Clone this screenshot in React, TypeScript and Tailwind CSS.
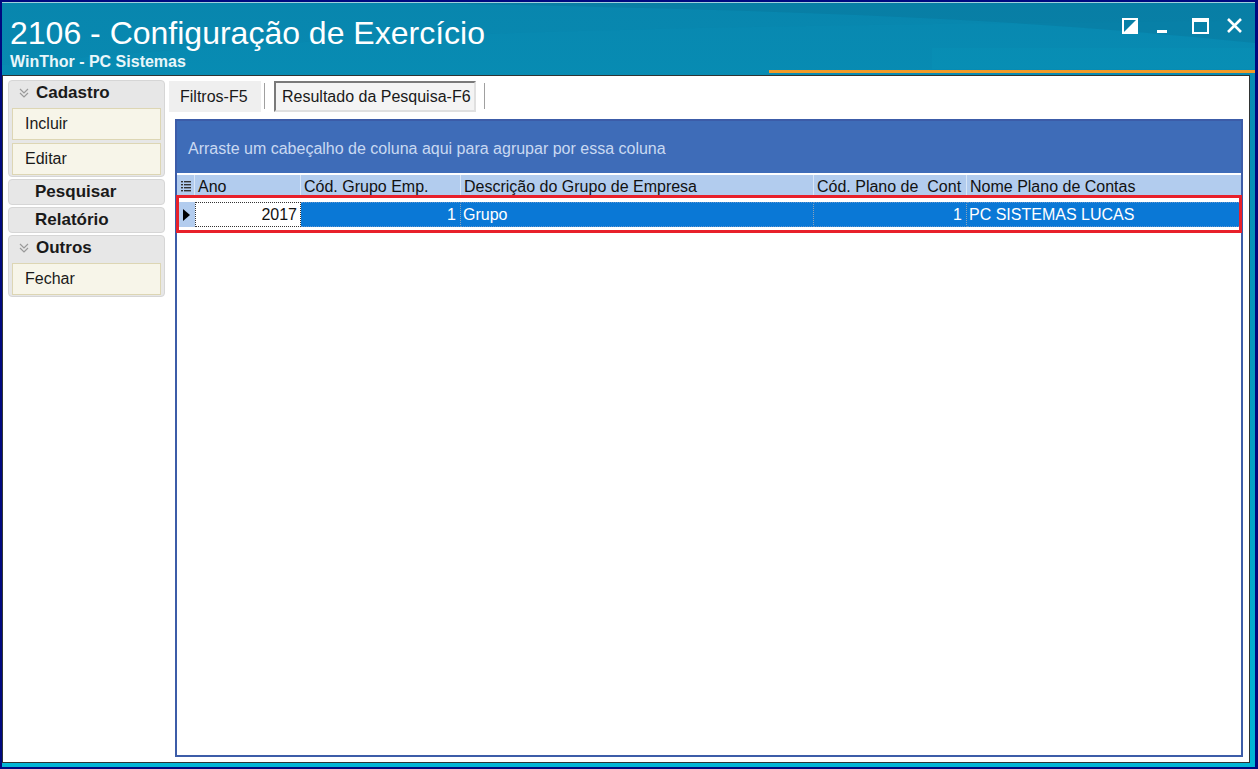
import React from 'react';

const cols = [
  { label: 'Ano', w: 'w-[106px]' },
  { label: 'Cód. Grupo Emp.', w: 'w-[160px]' },
  { label: 'Descrição do Grupo de Empresa', w: 'w-[353px]' },
  { label: 'Cód. Plano de  Cont', w: 'w-[153px]' },
  { label: 'Nome Plano de Contas', w: 'flex-1' },
];

const SideItem = ({ label }: { label: string }) => (
  <div className="mx-[3px] flex h-[32px] items-center border border-[#ddd6b4] bg-[#f7f5e9] pl-[12px] text-[16px] text-[#1a1a1a]">
    {label}
  </div>
);

const Chevrons = () => (
  <svg width="12" height="12" viewBox="0 0 12 12" className="mr-[6px]">
    <path d="M2 2 L6 6 L10 2 M2 6 L6 10 L10 6" fill="none" stroke="#9a9a9a" strokeWidth="1.2" />
  </svg>
);

const GroupHeader = ({ label, chevron }: { label: string; chevron?: boolean }) => (
  <div className="flex h-[24px] items-center pl-[9px] text-[17px] font-bold text-[#1a1a1a]">
    {chevron ? <Chevrons /> : <span className="w-[17px]" />}
    {label}
  </div>
);

const App = () => {
  return (
    <div className="h-[769px] w-[1258px] overflow-hidden bg-[#00097f] pb-[2px] pl-[2px] pr-[3px] pt-[2px] font-['Liberation_Sans',Arial,sans-serif]">
      <div className="flex h-full flex-col border-t border-[#9fd0dc] bg-[linear-gradient(180deg,#0888b0_0%,#0698bc_45%,#02b6d6_100%)]">
        {/* Title bar */}
        <div className="relative h-[66px] overflow-hidden">
          <svg className="absolute inset-0" width="1253" height="66" viewBox="0 0 1253 66" preserveAspectRatio="none">
            <path d="M0 62 C 300 30, 700 22, 1253 18 L1253 0 L0 0 Z" fill="#0a7ea4" opacity="0.18" />
            <path d="M420 0 C 800 8, 1000 14, 1253 40 L1253 0 Z" fill="#06678c" opacity="0.25" />
            <path d="M930 45 L1253 45 L1253 66 L930 66 Z" fill="#0796bb" opacity="0.25" />
          </svg>
          <div className="relative flex items-start justify-between pl-[8px] pr-[12px]">
            <div className="flex flex-col">
              <div className="pt-[14px] text-[32px] leading-[32px] text-white">2106 - Configuração de Exercício</div>
              <div className="mt-[4px] text-[16px] font-bold leading-[18px] text-[#e8f6fa]">WinThor - PC Sistemas</div>
            </div>
            <div className="flex items-start pt-[15px]">
              <svg width="16" height="16" viewBox="0 0 16 16" className="mr-[18px]">
                <rect x="1" y="1" width="14" height="14" fill="none" stroke="white" strokeWidth="2" />
                <path d="M1 15 L15 1 L15 15 Z" fill="white" />
              </svg>
              <svg width="12" height="16" viewBox="0 0 12 16" className="mr-[24px]">
                <rect x="1" y="12" width="10" height="3" fill="white" />
              </svg>
              <svg width="17" height="16" viewBox="0 0 17 16" className="mr-[17px]">
                <rect x="1" y="1" width="15" height="14" fill="none" stroke="white" strokeWidth="2" />
                <rect x="1" y="1" width="15" height="3" fill="white" />
              </svg>
              <svg width="17" height="16" viewBox="0 0 17 16">
                <path d="M2 1 L15 14 M15 1 L2 14" stroke="white" strokeWidth="2.6" />
              </svg>
            </div>
          </div>
        </div>
        <div className="flex h-[6px] items-start justify-end">
          <div className="mt-[1px] h-[3px] w-[486px] bg-[#f09a28]" />
        </div>

        {/* Content panel */}
        <div className="mb-[4px] mr-[5px] flex flex-1 border border-[#2f3434] bg-white pb-[5px] pl-[5px] pr-[6px] pt-[4px]">
          {/* Sidebar */}
          <div className="flex w-[157px] flex-col gap-[2px]">
            <div className="flex flex-col gap-[3px] rounded-[4px] border border-[#d6d6d6] bg-[#e7e7e7] pb-[1px]">
              <GroupHeader label="Cadastro" chevron />
              <SideItem label="Incluir" />
              <SideItem label="Editar" />
            </div>
            <div className="rounded-[4px] border border-[#d6d6d6] bg-[#e7e7e7]">
              <GroupHeader label="Pesquisar" />
            </div>
            <div className="rounded-[4px] border border-[#d6d6d6] bg-[#e7e7e7]">
              <GroupHeader label="Relatório" />
            </div>
            <div className="flex flex-col gap-[3px] rounded-[4px] border border-[#d6d6d6] bg-[#e7e7e7] pb-[1px]">
              <GroupHeader label="Outros" chevron />
              <SideItem label="Fechar" />
            </div>
          </div>

          {/* Main */}
          <div className="ml-[4px] flex flex-1 flex-col">
            {/* Tabs */}
            <div className="flex h-[34px] items-start pt-[1px]">
              <div className="flex h-[31px] w-[92px] items-center bg-[#efefef] pl-[11px] text-[16px] text-[#1a1a1a]">Filtros-F5</div>
              <div className="ml-[3px] mt-[2px] h-[26px] w-[1px] bg-[#a0a0a0]" />
              <div className="ml-[9px] flex h-[31px] w-[202px] items-center border-2 border-b-[#e0e0e0] border-l-[#7a7a7a] border-r-[#e0e0e0] border-t-[#7a7a7a] bg-[#f4f4f4] pl-[6px] text-[16px] text-[#1a1a1a]">
                Resultado da Pesquisa-F6
              </div>
              <div className="ml-[8px] mt-[2px] h-[26px] w-[1px] bg-[#a0a0a0]" />
            </div>

            {/* Grid */}
            <div className="relative ml-[6px] mt-[5px] flex flex-1 flex-col border-2 border-[#3c5ca8] bg-white text-[16px]">
              <div className="flex h-[52px] items-center bg-[#3e6cb8] pl-[11px] pt-[3px] text-[#c9d9f2]">
                Arraste um cabeçalho de coluna aqui para agrupar por essa coluna
              </div>
              <div className="mt-[2px] flex h-[23px] bg-[#b2ccee] text-[#111]">
                <div className="flex w-[18px] items-center justify-center border-r border-[#d8e6f7]">
                  <svg width="10" height="14" viewBox="0 0 10 14">
                    <g fill="#333">
                      <rect x="0" y="1" width="2" height="1.4" />
                      <rect x="3" y="1" width="7" height="1.4" />
                      <rect x="0" y="4" width="2" height="1.4" />
                      <rect x="3" y="4" width="7" height="1.4" />
                      <rect x="0" y="7" width="2" height="1.4" />
                      <rect x="3" y="7" width="7" height="1.4" />
                      <rect x="0" y="10" width="2" height="1.4" />
                      <rect x="3" y="10" width="7" height="1.4" />
                    </g>
                  </svg>
                </div>
                {cols.map((c, i) => (
                  <div
                    key={c.label}
                    className={`${c.w} flex items-center overflow-hidden whitespace-pre pl-[3px] ${i < cols.length - 1 ? 'border-r border-[#d8e6f7]' : ''}`}
                  >
                    {c.label}
                  </div>
                ))}
              </div>
              <div className="mt-[4px] flex h-[25px] pr-[2px] text-white">
                <div className="flex w-[18px] items-center justify-center bg-[#b2ccee]">
                  <svg width="7" height="12" viewBox="0 0 7 12">
                    <path d="M0 0 L7 6 L0 12 Z" fill="#000" />
                  </svg>
                </div>
                <div className="flex w-[106px] items-center justify-end border border-dotted border-[#333] bg-white pr-[3px] text-[#111]">2017</div>
                <div className="flex w-[160px] items-center justify-end border-y border-r border-dotted border-y-[#5f95cf] border-r-[#8ca2b8] bg-[#0a78d6] pr-[4px]">1</div>
                <div className="flex w-[353px] items-center border-y border-r border-dotted border-y-[#5f95cf] border-r-[#8ca2b8] bg-[#0a78d6] pl-[2px]">Grupo</div>
                <div className="flex w-[153px] items-center justify-end border-y border-r border-dotted border-y-[#5f95cf] border-r-[#8ca2b8] bg-[#0a78d6] pr-[4px]">1</div>
                <div className="flex flex-1 items-center border-y border-dotted border-[#5f95cf] bg-[#0a78d6] pl-[2px]">PC SISTEMAS LUCAS</div>
              </div>
              {/* annotation highlight */}
              <div className="pointer-events-none absolute left-[-1px] right-[-1px] top-[74px] h-[38px] border-[3px] border-[#e8202a]" />
            </div>
          </div>
        </div>
      </div>
    </div>
  );
};

export default App;
